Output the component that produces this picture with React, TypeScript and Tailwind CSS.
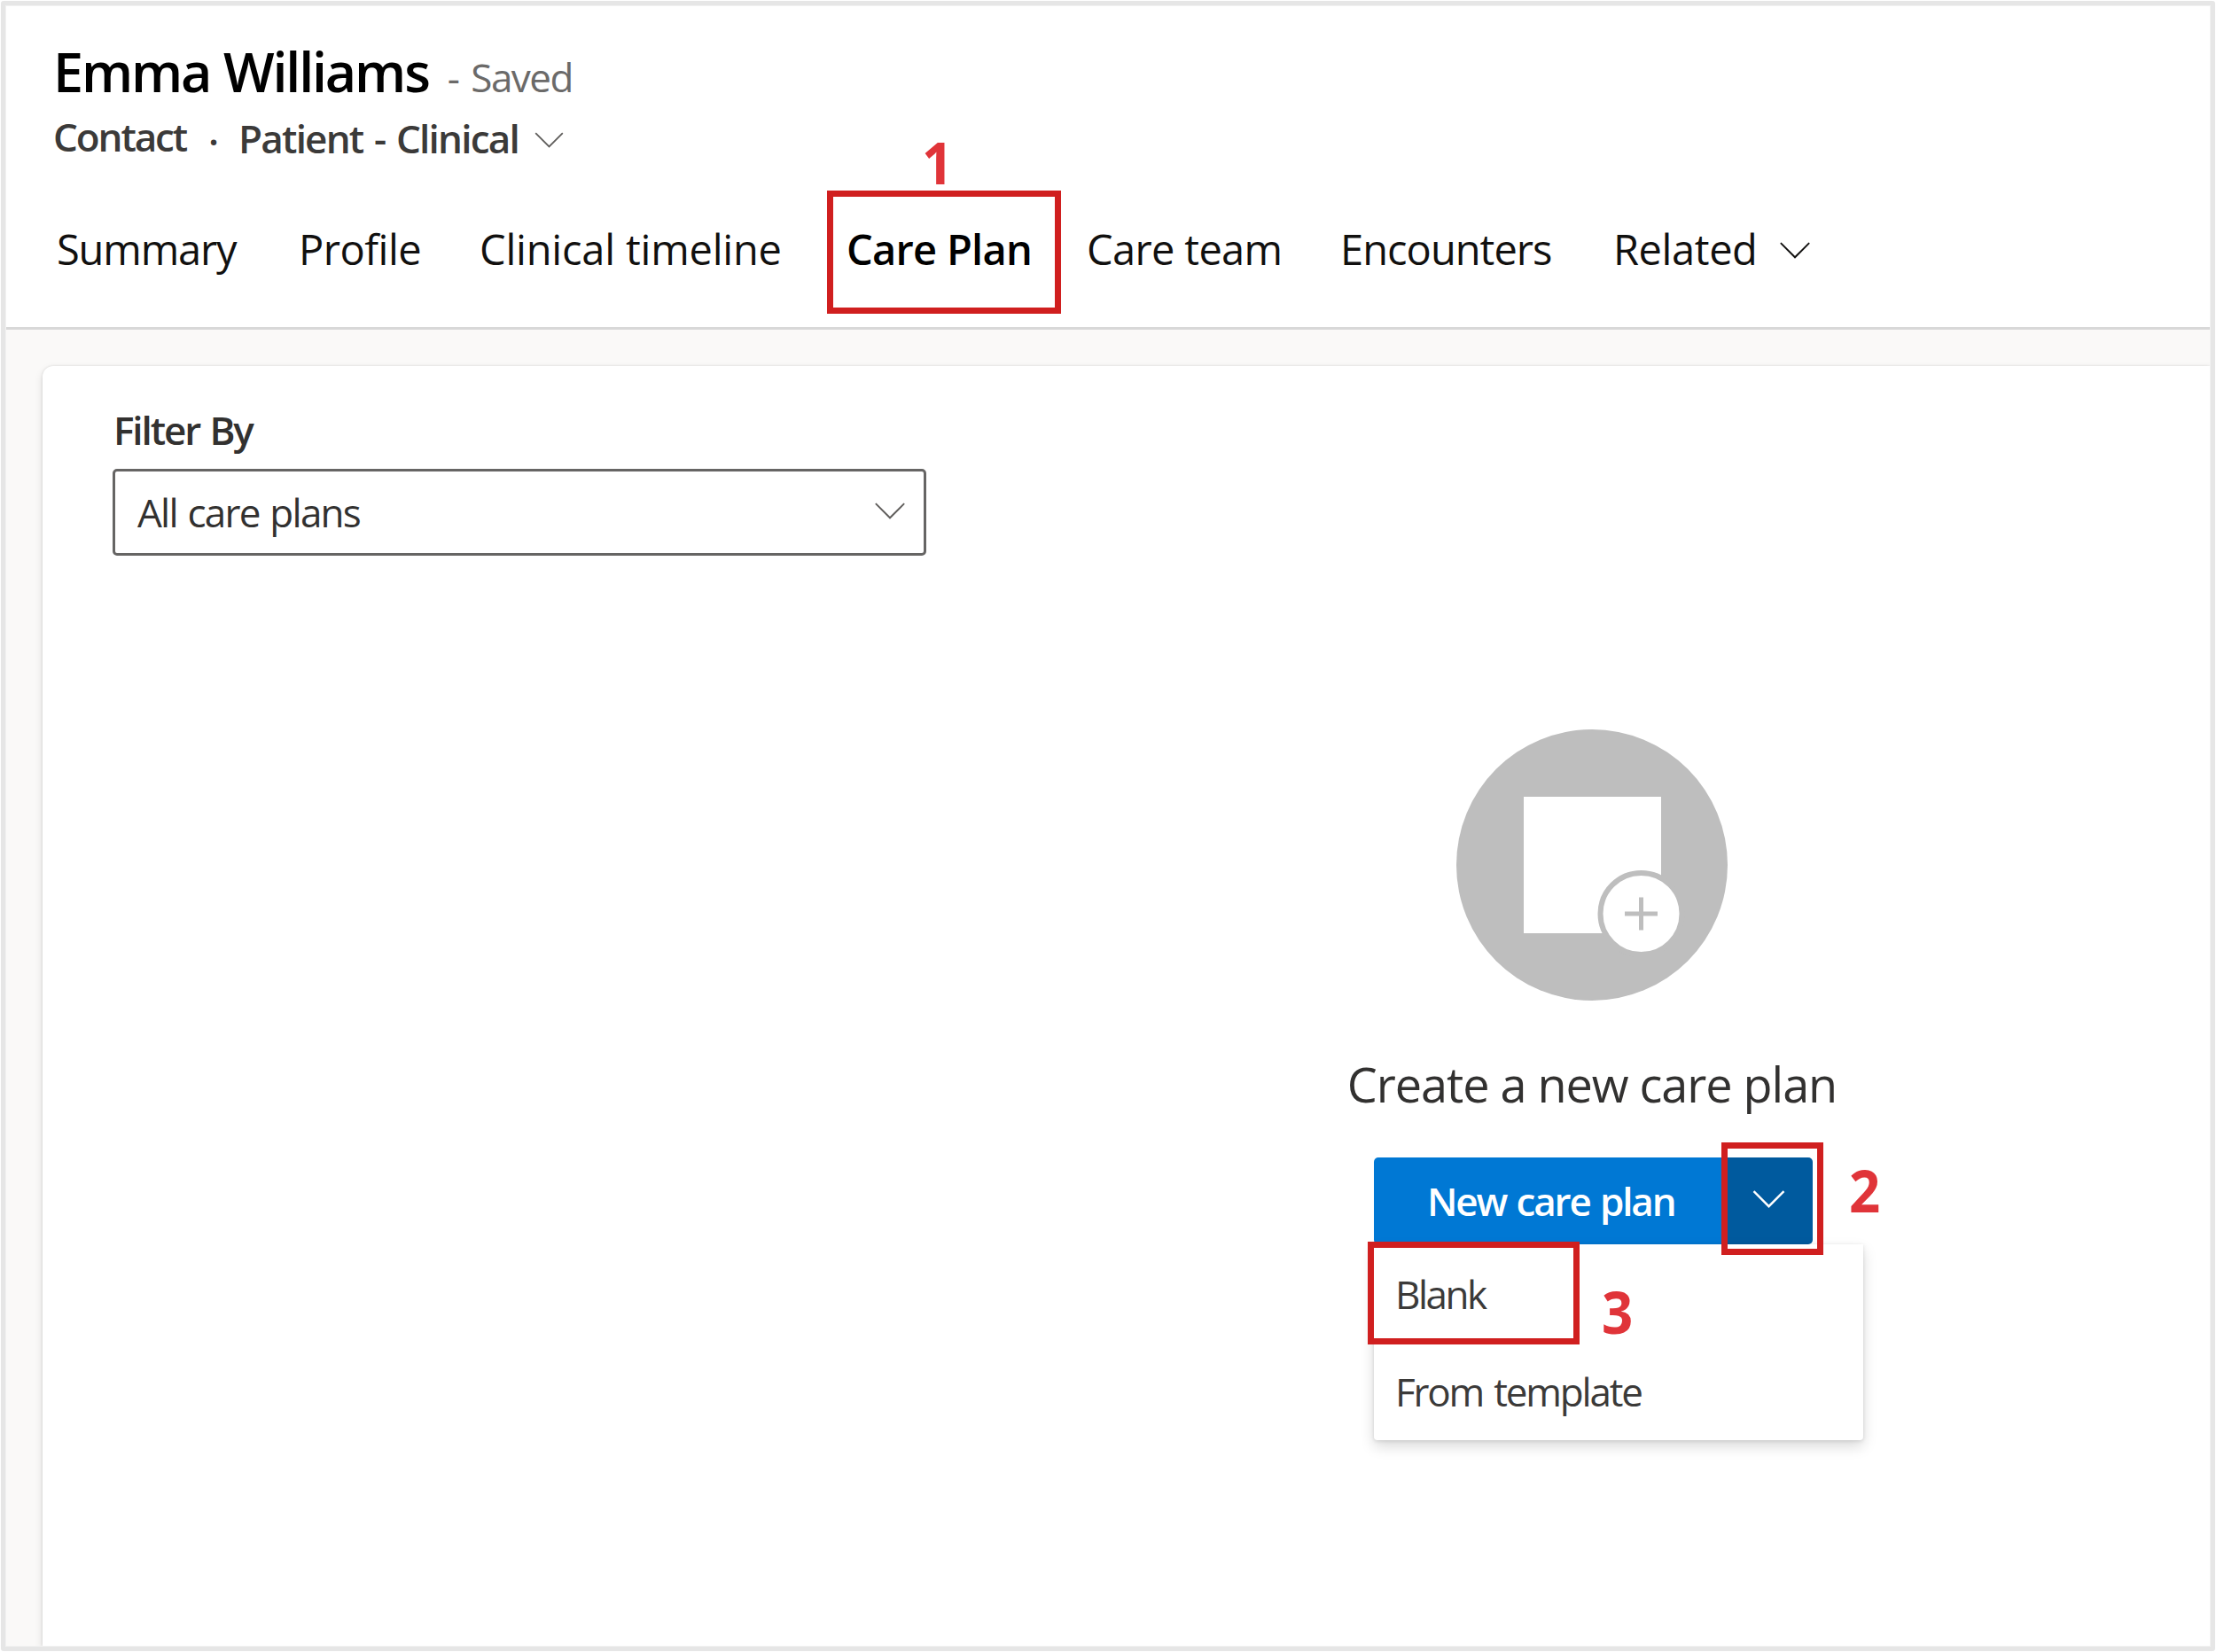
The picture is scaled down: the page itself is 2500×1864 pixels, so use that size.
import React from "react";

type ChevronProps = { className: string; width?: number };

function Chevron({ className, width = 2 }: ChevronProps) {
  return (
    <svg viewBox="0 0 36 20" fill="none" stroke="currentColor" strokeWidth={width} className={className}>
      <path d="M1 1.2 18 18.2 35 1.2" />
    </svg>
  );
}

/** Red outline that marks a step of the walkthrough. */
function Marker({ className }: { className: string }) {
  return <span className={`pointer-events-none absolute border-7 border-[#d01f1f] ${className}`} />;
}

function Step({ children, className }: { children: React.ReactNode; className: string }) {
  return (
    <span
      className={`absolute origin-left scale-x-92 text-[67px] leading-none font-bold text-[#e03439] ${className}`}
    >
      {children}
    </span>
  );
}

const tabs = [
  { label: "Summary", box: "w-[273px] tracking-[-1.16px]" },
  { label: "Profile", box: "w-[204px] tracking-[-0.5px]" },
  { label: "Clinical timeline", box: "w-[414px] tracking-[-0.2px]" },
  { label: "Care Plan", box: "w-[271px] tracking-[-0.75px]", active: true },
  { label: "Care team", box: "w-[286px] tracking-[-0.65px]" },
  { label: "Encounters", box: "w-[308px] tracking-[-0.96px]" },
  { label: "Related", box: "w-[187px] tracking-[-0.4px]" },
];

function Header() {
  return (
    <header className="h-[365px] shrink-0 border-b-3 border-[#d8d8d8] pt-[34px] pl-[53px]">
      <div className="flex items-baseline">
        <h1 className="text-[61px] leading-[80px] font-semibold tracking-[-2.15px] text-black [word-spacing:1px]">
          Emma Williams
        </h1>
        <span className="ml-[21px] text-[44px] tracking-[-1.5px] text-[#6b6a69] [word-spacing:4px]">- Saved</span>
      </div>
      <div className="mt-[3px] flex h-[60px] items-start text-[44px] leading-[60px] font-semibold text-[#3b3a39]">
        <span className="w-[149px] tracking-[-2.1px]">Contact</span>
        <span className="mt-[5px] ml-[26px]">·</span>
        <button className="mt-[2px] ml-[22px] flex items-center">
          <span className="tracking-[-1.8px] [word-spacing:3px]">Patient - Clinical</span>
          <Chevron className="mt-[3px] ml-[18px] h-[18px] w-[33px] text-[#605e5c]" />
        </button>
      </div>
      <nav className="mt-[67px] ml-[4px] flex text-[47px] leading-[60px] whitespace-nowrap text-[#11100f]">
        {tabs.map((tab) => (
          <div key={tab.label} className={`relative ${tab.box} ${tab.active ? "font-semibold text-black" : ""}`}>
            {tab.label}
            {tab.active && (
              <>
                <Marker className="top-[-36px] left-[-22px] h-[139px] w-[264px]" />
                <Step className="top-[-102px] left-[85px]">1</Step>
              </>
            )}
          </div>
        ))}
        <Chevron className="mt-[22px] h-[19px] w-[36px]" />
      </nav>
    </header>
  );
}

function EmptyState() {
  return (
    <svg viewBox="0 0 306 306" className="size-[306px]">
      <circle cx="153" cy="153" r="153" fill="#bebebe" />
      <path fill="#fff" d="M76 76h155v154H76z" />
      <circle cx="208.500" cy="208" r="46" fill="#fff" stroke="#bebebe" strokeWidth="6" />
      <path d="M190 208h37M208.500 189.500v37" stroke="#bebebe" strokeWidth="5" />
    </svg>
  );
}

export default function App() {
  return (
    <div className="h-[1864px] w-[2500px] bg-white p-px font-['Open_Sans',sans-serif]">
      <div className="h-[1862px] rounded-[3px] border-5 border-[#e6e6e6]">
        <div className="flex h-full flex-col border border-[#f2f2f2] bg-white">
          <Header />
          <main className="flex flex-1 overflow-hidden bg-[#faf9f8] pt-[41px] pl-[41px]">
            <section className="flex-1 rounded-tl-[12px] bg-white pt-[42px] pl-[79px] shadow-[0_4px_10px_rgba(0,0,0,0.13),0_0_3px_rgba(0,0,0,0.12)]">
              <label className="ml-px block text-[44px] leading-[60px] font-semibold tracking-[-2.1px] text-[#323130] [word-spacing:2px]">
                Filter By
              </label>
              <div className="mt-[14px] flex h-[98px] w-[918px] items-center justify-between rounded-[5px] border-3 border-[#666564] pr-[20px] pb-px pl-[25px] text-[44px] tracking-[-1.75px] text-[#323130] [word-spacing:2px]">
                All care plans
                <Chevron className="mb-[2px] h-[19px] w-[36px] text-[#605e5c]" />
              </div>

              <div className="mt-[196px] ml-[1369px] flex w-[600px] flex-col items-center">
                <EmptyState />
                <p className="mt-[54px] text-[54px] leading-[80px] tracking-[-1.05px] text-[#323130]">
                  Create a new care plan
                </p>
                <div className="relative mt-[43px] ml-[54px] flex h-[98px] w-[495px] self-start text-[44px]">
                  <button className="w-[396px] rounded-l-[5px] bg-[#0078d4] pb-px pl-[60px] text-left font-semibold tracking-[-2.15px] text-white [word-spacing:2px]">
                    New care plan
                  </button>
                  <button className="flex flex-1 items-center justify-center rounded-r-[5px] bg-[#005a9e] pb-[5px] text-white">
                    <Chevron className="h-[20px] w-[37px]" width={2.4} />
                  </button>
                  <div className="absolute top-full left-0 flex h-[221px] w-[552px] flex-col rounded-b-[4px] bg-white pt-px text-[#3b3a39] shadow-[0_7px_16px_rgba(0,0,0,0.15),0_1px_4px_rgba(0,0,0,0.12)]">
                    <div className="flex flex-1 items-center pl-[24px] tracking-[-2.49px]">Blank</div>
                    <div className="flex flex-1 items-center pl-[24px] tracking-[-2.2px] [word-spacing:3px]">
                      From template
                    </div>
                  </div>
                  <Marker className="top-[-17px] left-[392px] h-[127px] w-[115px]" />
                  <Marker className="top-[95px] left-[-7px] h-[116px] w-[239px]" />
                  <Step className="top-[3px] left-[536px]">2</Step>
                  <Step className="top-[140px] left-[257px]">3</Step>
                </div>
              </div>
            </section>
          </main>
        </div>
      </div>
    </div>
  );
}
